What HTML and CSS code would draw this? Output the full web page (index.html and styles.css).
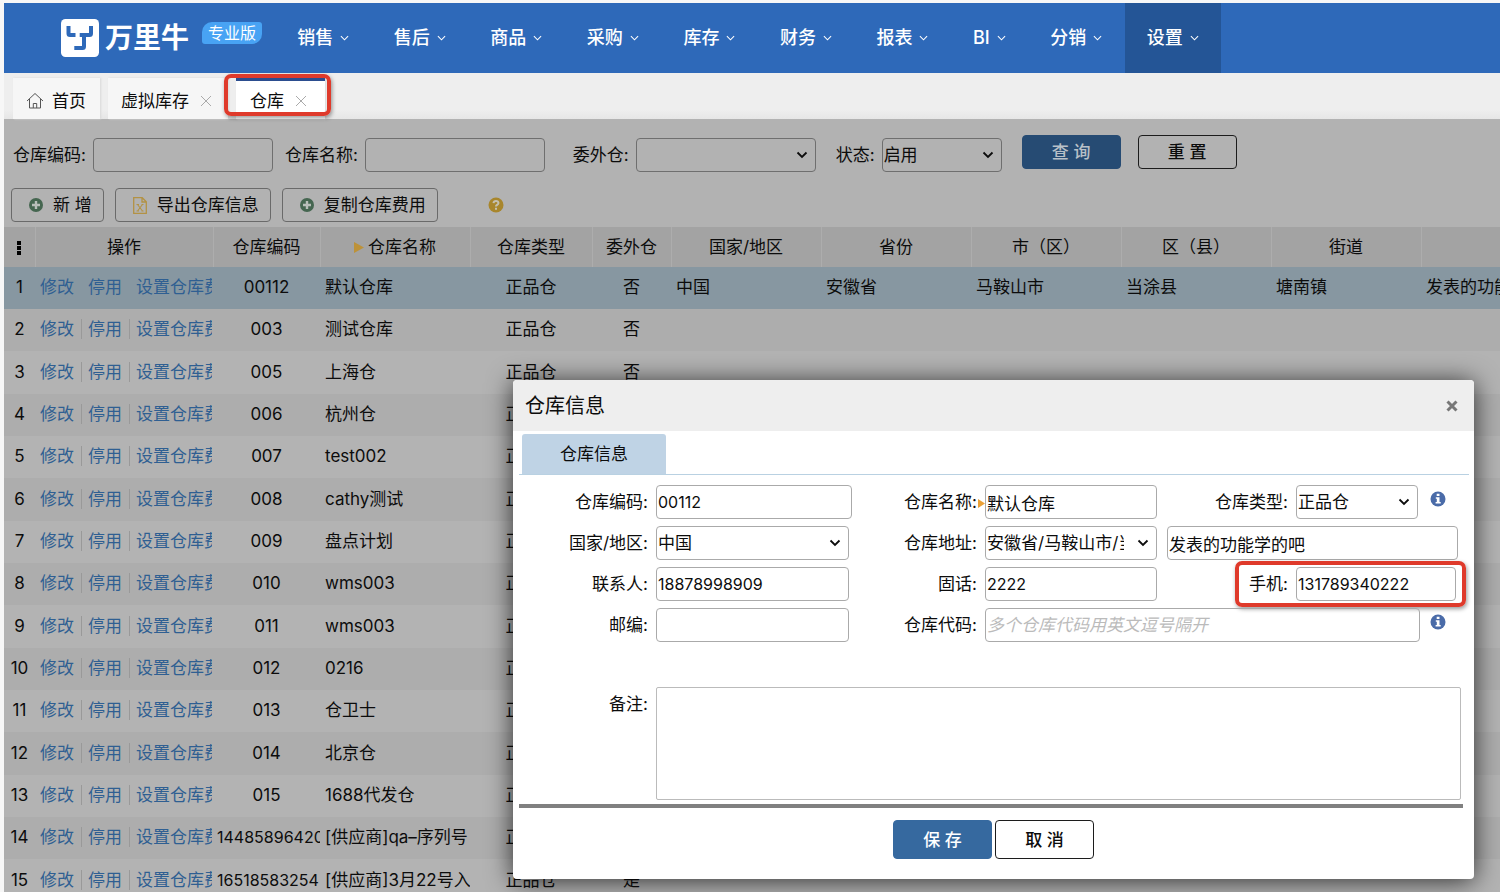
FILE: index.html
```html
<!DOCTYPE html>
<html lang="zh-CN">
<head>
<meta charset="utf-8">
<title>万里牛 - 仓库</title>
<link rel="stylesheet" href="styles.css">
</head>
<body>
<svg class="sprite" aria-hidden="true">
  <symbol id="chev" viewBox="0 0 10 6"><path d="M1 1l4 4 4-4" fill="none" stroke="currentColor" stroke-width="1.2"/></symbol>
  <symbol id="arrow" viewBox="0 0 12 8"><path d="M1.500 1.500L6 6l4.500-4.500" fill="none" stroke="currentColor" stroke-width="1.800"/></symbol>
  <symbol id="cross" viewBox="0 0 12 12"><path d="M1 1l10 10M11 1L1 11" fill="none" stroke="currentColor" stroke-width="1"/></symbol>
  <symbol id="plus" viewBox="0 0 14 14"><circle cx="7" cy="7" r="7" fill="#456650"/><path d="M7 3v8M3 7h8" stroke="#b8beb9" stroke-width="2.400"/></symbol>
  <symbol id="info" viewBox="0 0 16 16"><circle cx="8" cy="8" r="7.500" fill="#4a6ba8"/><path d="M6.700 2.800h2.800v2.300H6.700zM5.800 6.300h3.700v4.800h1.200v1.500H5.600v-1.500h1.200V7.800h-1z" fill="#fff"/></symbol>
  <symbol id="tri" viewBox="0 0 8 10" preserveAspectRatio="none"><path d="M0 0l8 5-8 5z" fill="currentColor"/></symbol>
</svg>
<div class="app">
  <header class="top">
    <a class="brand" href="#">
      <svg class="logo" viewBox="0 0 38 38" aria-hidden="true"><rect width="38" height="38" rx="4.500" fill="#fff"/><path d="M7.500 7v7.500q0 1.500 1.500 1.500h5.500M30 7v7.500q0 1.500-1.500 1.500h-9.800M23 16v11.500q0 1.500-1.500 1.500h-8.200" fill="none" stroke="#2e69b9" stroke-width="4"/></svg>
      <span class="wordmark">万里牛</span>
      <span class="edition">专业版</span>
    </a>
    <nav class="menu">
      <a href="#">销售<svg><use href="#chev"/></svg></a>
      <a href="#">售后<svg><use href="#chev"/></svg></a>
      <a href="#">商品<svg><use href="#chev"/></svg></a>
      <a href="#">采购<svg><use href="#chev"/></svg></a>
      <a href="#">库存<svg><use href="#chev"/></svg></a>
      <a href="#">财务<svg><use href="#chev"/></svg></a>
      <a href="#">报表<svg><use href="#chev"/></svg></a>
      <a href="#">BI<svg><use href="#chev"/></svg></a>
      <a href="#">分销<svg><use href="#chev"/></svg></a>
      <a href="#" class="current">设置<svg><use href="#chev"/></svg></a>
    </nav>
  </header>
  <div class="tabs">
    <a class="tab first" href="#"><svg class="home" viewBox="0 0 18 17"><path d="M1 9l8-7.500L17 9M3.500 7v9h11V7M7.300 16v-4.500h3.400V16" fill="none" stroke="#555" stroke-width="1"/></svg>首页</a>
    <a class="tab" href="#">虚拟库存<svg class="x"><use href="#cross"/></svg></a>
    <a class="tab active" href="#">仓库<svg class="x"><use href="#cross"/></svg><span class="mark mark-tab"></span></a>
  </div>
  <main class="page">
    <form class="filters">
      <label for="f-code">仓库编码:</label><input id="f-code" class="wide" type="text">
      <label for="f-name">仓库名称:</label><input id="f-name" class="wide" type="text">
      <label class="out" for="f-out">委外仓:</label><span class="select wide"><select id="f-out"><option></option></select><svg><use href="#arrow"/></svg></span>
      <label class="state" for="f-state">状态:</label><span class="select narrow"><select id="f-state"><option>启用</option></select><svg><use href="#arrow"/></svg></span>
      <button class="btn primary" type="button">查 询</button>
      <button class="btn" type="button">重 置</button>
    </form>
    <div class="tools">
      <button type="button"><svg class="plus"><use href="#plus"/></svg>新 增</button>
      <button type="button"><svg class="sheet" viewBox="0 0 14 17"><path d="M.700.700h8.500l4.100 4.100v11.500H.700zM9 .700V5h4.300" fill="none" stroke="#b39244" stroke-width="1.300"/><path d="M4.500 7.500l5 6.500M9.500 7.500l-5 6.500M3.500 7.500H6M8.500 7.500h2M3.500 14H6M8.500 14h2" fill="none" stroke="#b39244" stroke-width="1.100"/></svg>导出仓库信息</button>
      <button type="button"><svg class="plus"><use href="#plus"/></svg>复制仓库费用</button>
      <svg class="help" viewBox="0 0 16 16"><circle cx="8" cy="8" r="7.500" fill="#a8862c"/><path d="M5.500 6.200Q5.700 4 8 4t2.500 2.100Q10.500 7.300 9 8q-1 .5-1 1.500" fill="none" stroke="#c4c0b0" stroke-width="2"/><path d="M7 10.700h2v2H7z" fill="#c4c0b0"/></svg>
    </div>
    <table class="grid">
      <colgroup><col class="c-no"><col class="c-op"><col class="c-code"><col class="c-std"><col class="c-type"><col class="c-out"><col class="c-std"><col class="c-std"><col class="c-std"><col class="c-std"><col class="c-std"><col class="c-std"></colgroup>
      <thead><tr><th><svg class="dots" viewBox="0 0 4 14"><path d="M0 0h4v4H0zM0 5h4v4H0zM0 10h4v4H0z"/></svg></th><th>操作</th><th>仓库编码</th><th><svg class="tri"><use href="#tri"/></svg>仓库名称</th><th>仓库类型</th><th>委外仓</th><th>国家/地区</th><th>省份</th><th>市（区）</th><th>区（县）</th><th>街道</th><th></th></tr></thead>
      <tbody>
        <tr class="selected"><td>1</td><td class="ops"><a href="#">修改</a><a href="#">停用</a><a href="#">设置仓库费用</a></td><td>00112</td><td class="l">默认仓库</td><td>正品仓</td><td>否</td><td class="l">中国</td><td class="l">安徽省</td><td class="l">马鞍山市</td><td class="l">当涂县</td><td class="l">塘南镇</td><td class="l">发表的功能学的吧</td></tr>
        <tr><td>2</td><td class="ops"><a href="#">修改</a><a href="#">停用</a><a href="#">设置仓库费用</a></td><td>003</td><td class="l">测试仓库</td><td>正品仓</td><td>否</td><td colspan="6"></td></tr>
        <tr><td>3</td><td class="ops"><a href="#">修改</a><a href="#">停用</a><a href="#">设置仓库费用</a></td><td>005</td><td class="l">上海仓</td><td>正品仓</td><td>否</td><td colspan="6"></td></tr>
        <tr><td>4</td><td class="ops"><a href="#">修改</a><a href="#">停用</a><a href="#">设置仓库费用</a></td><td>006</td><td class="l">杭州仓</td><td>正品仓</td><td>否</td><td colspan="6"></td></tr>
        <tr><td>5</td><td class="ops"><a href="#">修改</a><a href="#">停用</a><a href="#">设置仓库费用</a></td><td>007</td><td class="l">test002</td><td>正品仓</td><td>否</td><td colspan="6"></td></tr>
        <tr><td>6</td><td class="ops"><a href="#">修改</a><a href="#">停用</a><a href="#">设置仓库费用</a></td><td>008</td><td class="l">cathy测试</td><td>正品仓</td><td>否</td><td colspan="6"></td></tr>
        <tr><td>7</td><td class="ops"><a href="#">修改</a><a href="#">停用</a><a href="#">设置仓库费用</a></td><td>009</td><td class="l">盘点计划</td><td>正品仓</td><td>否</td><td colspan="6"></td></tr>
        <tr><td>8</td><td class="ops"><a href="#">修改</a><a href="#">停用</a><a href="#">设置仓库费用</a></td><td>010</td><td class="l">wms003</td><td>正品仓</td><td>否</td><td colspan="6"></td></tr>
        <tr><td>9</td><td class="ops"><a href="#">修改</a><a href="#">停用</a><a href="#">设置仓库费用</a></td><td>011</td><td class="l">wms003</td><td>正品仓</td><td>否</td><td colspan="6"></td></tr>
        <tr><td>10</td><td class="ops"><a href="#">修改</a><a href="#">停用</a><a href="#">设置仓库费用</a></td><td>012</td><td class="l">0216</td><td>正品仓</td><td>否</td><td colspan="6"></td></tr>
        <tr><td>11</td><td class="ops"><a href="#">修改</a><a href="#">停用</a><a href="#">设置仓库费用</a></td><td>013</td><td class="l">仓卫士</td><td>正品仓</td><td>否</td><td colspan="6"></td></tr>
        <tr><td>12</td><td class="ops"><a href="#">修改</a><a href="#">停用</a><a href="#">设置仓库费用</a></td><td>014</td><td class="l">北京仓</td><td>正品仓</td><td>否</td><td colspan="6"></td></tr>
        <tr><td>13</td><td class="ops"><a href="#">修改</a><a href="#">停用</a><a href="#">设置仓库费用</a></td><td>015</td><td class="l">1688代发仓</td><td>正品仓</td><td>否</td><td colspan="6"></td></tr>
        <tr><td>14</td><td class="ops"><a href="#">修改</a><a href="#">停用</a><a href="#">设置仓库费用</a></td><td class="num">14485896420</td><td class="l">[供应商]qa–序列号</td><td>正品仓</td><td>否</td><td colspan="6"></td></tr>
        <tr><td>15</td><td class="ops"><a href="#">修改</a><a href="#">停用</a><a href="#">设置仓库费用</a></td><td class="num">16518583254</td><td class="l">[供应商]3月22号入</td><td>正品仓</td><td>是</td><td colspan="6"></td></tr>
      </tbody>
    </table>
  </main>
</div>
<section class="dialog" role="dialog" aria-labelledby="dlg-title">
  <header class="dialog-head"><h2 id="dlg-title">仓库信息</h2><button type="button" aria-label="关闭"><svg viewBox="0 0 12 12"><path d="M1.500 1.500l9 9M10.500 1.500l-9 9" stroke="#777" stroke-width="3"/></svg></button></header>
  <div class="dialog-tabs"><a href="#">仓库信息</a></div>
  <form class="fields">
    <label for="d-code">仓库编码:</label><input id="d-code" class="num" type="text" value="00112">
    <label class="required" for="d-name">仓库名称:<svg class="tri"><use href="#tri"/></svg></label><input id="d-name" type="text" value="默认仓库">
    <label for="d-type">仓库类型:</label><div class="group"><span class="select narrow"><select id="d-type"><option>正品仓</option></select><svg><use href="#arrow"/></svg></span><svg class="info"><use href="#info"/></svg></div>

    <label for="d-country">国家/地区:</label><span class="select short"><select id="d-country"><option>中国</option></select><svg><use href="#arrow"/></svg></span>
    <label for="d-area">仓库地址:</label><span class="select"><select id="d-area"><option>安徽省/马鞍山市/当涂县</option></select><svg><use href="#arrow"/></svg></span>
    <input class="address" type="text" aria-label="详细地址" value="发表的功能学的吧">

    <label for="d-person">联系人:</label><input id="d-person" class="num short" type="text" value="18878998909">
    <label for="d-tel">固话:</label><input id="d-tel" class="num" type="text" value="2222">
    <label for="d-mobile">手机:</label><div class="group mobile"><input id="d-mobile" class="num" type="text" value="131789340222"><span class="mark mark-mobile"></span></div>

    <label for="d-zip">邮编:</label><input id="d-zip" class="short" type="text">
    <label for="d-alias">仓库代码:</label><div class="group alias"><input id="d-alias" type="text" placeholder="多个仓库代码用英文逗号隔开"><svg class="info"><use href="#info"/></svg></div>

    <label class="note-label" for="d-note">备注:</label><textarea id="d-note"></textarea>
  </form>
  <footer class="dialog-foot"><button class="btn primary" type="button">保 存</button><button class="btn" type="button">取 消</button></footer>
</section>
</body>
</html>
```
FILE: styles.css
```css
* { box-sizing: border-box; }
body {
  margin: 0;
  height: 100vh;
  overflow: hidden;
  position: relative;
  background: #f7f7f7;
  color: #0c0c0c;
  font: 17px/24px Inter, "Noto Sans CJK SC", sans-serif;
}
a { color: inherit; text-decoration: none; }
input, select, textarea, button { font: inherit; color: inherit; margin: 0; }
.sprite { position: absolute; width: 0; height: 0; }

.app { display: flex; flex-direction: column; height: 100vh; padding: 3px 0 0 4px; overflow: hidden; }
.top { display: flex; flex: none; height: 70px; background: #2e69b9; color: #fff; }
.brand { display: flex; align-items: center; width: 271px; padding-left: 57px; }
.logo { width: 38px; height: 38px; margin-right: 6px; }
.wordmark { font-size: 28px; line-height: 40px; font-weight: 700; }
.edition {
  margin: 0 0 10px 13px;
  padding: 0 6px;
  font-size: 16px;
  line-height: 22px;
  background: #48a3f4;
  border-radius: 10px 3px 10px 3px;
}
.menu { display: flex; width: 946px; font-size: 18px; font-weight: 500; }
.menu a { display: flex; flex: 1 1 auto; align-items: center; justify-content: center; gap: 7px; padding: 0 22px; }
.menu svg { width: 9px; height: 6px; }
.menu .current { background: #245596; }

.tabs { display: flex; flex: none; gap: 8px; height: 46px; padding: 5px 9px 0; background: linear-gradient(#eee 80%, #e6e6e6); }
.tab { display: flex; position: relative; align-items: center; height: 41px; padding: 4px 16px 0 13px; background: #f6f6f6; box-shadow: 1px 0 2px #d8d8d8; }
.tab.first { padding-right: 14px; }
.tab.active { padding: 1px 18px 0 14px; background: #fff; border-top: 3px solid #2b4d8f; }
.home { width: 18px; height: 17px; margin-right: 8px; }
.x { width: 12px; height: 12px; margin-left: 11px; color: #aaa; }
.mark { position: absolute; border: 4px solid #df3a2b; border-radius: 7px; box-shadow: 1px 2px 4px rgba(0, 0, 0, .4); pointer-events: none; }
.mark-tab { left: -12px; right: -6px; top: -7px; bottom: 3px; }

.page { flex: 1; min-height: 0; overflow: hidden; background: #b2b2b2; }
.filters { display: flex; align-items: center; padding: 16px 0 0 9px; }
.filters label { margin-right: 7px; }
.filters input { margin-right: 12px; }
.filters .out { margin-left: 16px; }
.filters .state { margin-left: 20px; }
input, select, textarea { border: 1px solid #aaa; border-radius: 4px; background: transparent; outline: 0; }
input, select { height: 34px; padding: 0 1px; }
.filters input, .filters select { border-color: #6f6f6f; }
.wide { width: 180px; }
.narrow { width: 120px; }
.select { display: inline-block; position: relative; }
.select select { display: block; width: 100%; padding-right: 32px; appearance: none; }
.select svg { position: absolute; right: 8px; top: 13px; width: 12px; height: 8px; pointer-events: none; }
.btn { width: 99px; height: 34px; padding: 0; border: 1px solid #1c1c1c; border-radius: 4px; background: transparent; font-weight: 500; }
.filters .btn { margin: 0 0 5px 17px; }
.btn.primary { border-color: #36699f; background: #36699f; color: #fff; }
.filters .btn.primary { margin-left: 20px; border-color: #264b73; background: #264b73; color: #b8c0c8; }

.tools { display: flex; align-items: center; gap: 11px; padding: 14px 0 5px 7px; }
.tools button { display: flex; align-items: center; height: 34px; padding: 0 11px 0 17px; border: 1px solid #6a6a6a; border-radius: 4px; background: transparent; white-space: nowrap; }
.plus { width: 14px; height: 14px; margin-right: 10px; }
.sheet { width: 14px; height: 17px; margin-right: 10px; }
.help { width: 16px; height: 16px; margin-left: 39px; }

.grid { width: 1566px; table-layout: fixed; border-collapse: collapse; }
.c-no { width: 31px; }
.c-op { width: 178px; }
.c-code { width: 107px; }
.c-std { width: 150px; }
.c-type { width: 122px; }
.c-out { width: 79px; }
.grid th, .grid td { padding: 0 4px; overflow: hidden; white-space: nowrap; text-align: center; font-weight: 400; }
.grid th { height: 40px; background: #a3a3a3; border-right: 1px solid #adadad; }
.grid td { height: 42px; background: #b3b3b3; padding-bottom: 2px; }
.grid tr:nth-child(3n) td { height: 43px; }
.grid tr:nth-child(even) td { background: #adadad; }
.grid tr.selected td { background: #8797a1; }
.grid td:first-child { padding: 0 0 2px; }
.grid .l { text-align: left; padding-left: 5px; padding-right: 0; }
.grid .ops { text-align: left; color: #2f5f92; padding-left: 5px; padding-right: 1px; overflow: clip; overflow-clip-margin: content-box; }
.ops a + a { margin-left: 7px; padding-left: 6px; border-left: 1px solid #999; }
.selected .ops a + a { border-color: transparent; }
.dots { width: 4px; height: 14px; vertical-align: -2px; }
.grid .tri { width: 10px; height: 11px; margin-right: 4px; color: #bd9239; }
.num { font-size: 16px; }

.dialog {
  position: absolute;
  left: 513px;
  right: 26px;
  top: 380px;
  background: #fff;
  border-radius: 4px;
  box-shadow: 0 2px 26px rgba(0, 0, 0, .75);
}
.dialog-head { display: flex; align-items: center; justify-content: space-between; height: 51px; padding: 0 16px 0 12px; background: #eee; border-radius: 4px 4px 0 0; }
.dialog-head h2 { margin: 0; font-size: 20px; font-weight: 400; }
.dialog-head button { display: flex; padding: 0; border: 0; background: none; }
.dialog-head svg { width: 12px; height: 12px; }
.dialog-tabs { display: flex; margin: 3px 5px 0 6px; padding-left: 3px; border-bottom: 1px solid #b9d1e2; }
.dialog-tabs a { width: 144px; line-height: 40px; text-align: center; background: #bfd3e5; border-radius: 3px 3px 0 0; }

.fields { display: grid; grid-template-columns: 143px 196px 133px 172px 139px 1fr; row-gap: 7px; align-items: center; padding-top: 10px; }
.fields label { padding-right: 8px; text-align: right; white-space: nowrap; }
.fields .required { padding-right: 0; }
.required .tri { width: 7px; height: 9px; margin-left: 1px; color: #eba136; }
.fields input { width: 100%; }
.fields .short { width: 193px; }
.group { display: flex; position: relative; }
.group .narrow { width: 122px; }
.info { flex: none; width: 16px; height: 16px; margin: 6px 0 0 12px; }
.fields .address { grid-column: 5 / 7; width: auto; margin: 0 16px 0 10px; }
.mobile { padding-right: 18px; }
.mark-mobile { left: -61px; right: 8px; top: -6px; bottom: -6px; }
.alias { grid-column: 4 / 7; padding-right: 28px; }
.alias input { flex: 1; }
.alias .info { margin-left: 10px; }
.alias input::placeholder { color: #bbb; font-style: italic; }
.fields .note-label { align-self: start; margin-top: 43px; }
.fields textarea { grid-column: 2 / 7; height: 113px; margin: 38px 13px 0 0; resize: none; border-color: #bbb; border-radius: 2px; }
.dialog-foot { display: flex; justify-content: center; gap: 3px; margin: 4px 11px 0 6px; padding: 12px 0 20px 5px; border-top: 4px solid #808080; }
.dialog-foot .btn { height: 39px; }
```
